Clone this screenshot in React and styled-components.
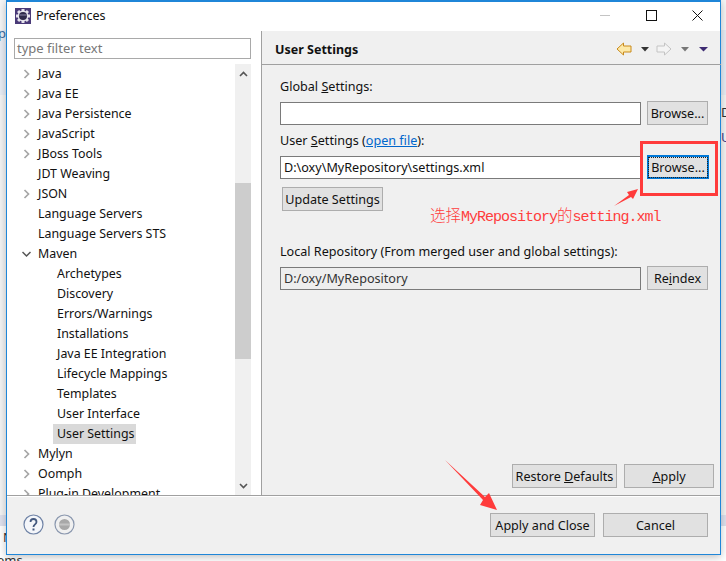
import React from 'react';
import styled, { createGlobalStyle } from 'styled-components';

const Global = createGlobalStyle`
  html, body { margin: 0; padding: 0; }
  body { background: #fff; font-family: "Noto Sans", "Noto Sans CJK SC", sans-serif; font-size: 13px; color: #111; }
`;

const Page = styled.div`
  position: relative;
  width: 726px;
  height: 561px;
  overflow: hidden;
  background: linear-gradient(
    #f6f6f6 0, #f6f6f6 30px,
    #e8edf5 30px, #e8edf5 95px,
    #f4f4f4 95px, #f4f4f4 515px,
    #dfe1ee 515px, #dfe1ee 526px,
    #fff 526px
  );
  padding-left: 6px;
  box-sizing: border-box;
`;

const Behind = styled.span`
  position: absolute;
  left: ${p => p.$x}px;
  top: ${p => p.$y}px;
  font-size: 13px;
  color: ${p => p.$color || '#333'};
`;

const Win = styled.div`
  position: relative;
  width: 715px;
  height: 555px;
  box-sizing: border-box;
  border: 1px solid #1f86d8;
  border-top-width: 2px;
  background: #f0f0f0;
  display: flex;
  flex-direction: column;
  box-shadow: 0 2px 8px rgba(0, 0, 0, 0.25);
`;

const TitleBar = styled.div`
  height: 29px;
  flex: none;
  box-sizing: border-box;
  padding: 0 0 2px 8px;
  background: #fff;
  display: flex;
  align-items: center;
  gap: 5px;
  font-size: 12.5px;
  color: #111;
`;

const TitleText = styled.span`
  flex: 1;
`;

const WinBtns = styled.div`
  display: flex;
`;

const WinBtn = styled.div`
  width: 46px;
  height: 27px;
  display: flex;
  align-items: center;
  justify-content: center;
`;

const Body = styled.div`
  flex: 1;
  display: flex;
  min-height: 0;
`;

const Sidebar = styled.div`
  width: 254px;
  flex: none;
  background: #fff;
  box-sizing: border-box;
  padding: 7px 0 0 7px;
  display: flex;
  flex-direction: column;
`;

const Filter = styled.div`
  width: 237px;
  height: 21px;
  flex: none;
  box-sizing: border-box;
  border: 1px solid #a9a9a9;
  padding-left: 2px;
  font-size: 13px;
  line-height: 18px;
  color: #777;
`;

const TreeWrap = styled.div`
  flex: 1;
  min-height: 0;
  margin-top: 5px;
  width: 237px;
  display: flex;
  overflow: hidden;
`;

const Tree = styled.div`
  flex: 1;
  overflow: hidden;
`;

const Row = styled.div`
  height: 20px;
  line-height: 19px;
  display: flex;
  align-items: flex-start;
  padding-left: ${p => p.$depth * 19 + 8}px;
  gap: 7px;
  font-size: 12.4px;
  white-space: nowrap;
  color: #111;
`;

const Twist = styled.svg`
  width: 9px;
  height: 10px;
  flex: none;
  margin-top: 5px;
`;

const Leaf = styled.span`
  padding: 0 2px 0 4px;
  height: 20px;
  line-height: 19px;
  margin-left: 12px;
  background: ${p => (p.$sel ? '#d9d9d9' : 'transparent')};
`;

const Scrollbar = styled.div`
  width: 16px;
  flex: none;
  background: #f0f0f0;
  display: flex;
  flex-direction: column;
  align-items: center;
`;

const ScrollBtn = styled.div`
  height: 19px;
  flex: none;
  display: flex;
  align-items: center;
  justify-content: center;
`;

const Track = styled.div`
  flex: 1;
  width: 100%;
  padding-top: 100px;
  box-sizing: border-box;
`;

const Thumb = styled.div`
  height: 176px;
  background: #cdcdcd;
`;

const Sash = styled.div`
  width: 1px;
  flex: none;
  background: #a0a0a0;
`;

const Panel = styled.div`
  flex: 1;
  display: flex;
  flex-direction: column;
`;

const PanelHead = styled.div`
  height: 34px;
  flex: none;
  box-sizing: border-box;
  border-bottom: 1px solid #a0a0a0;
  display: flex;
  align-items: center;
  padding: 3px 5px 0 13px;
  font-weight: 700;
  font-size: 12.5px;
  line-height: 19px;
`;

const HeadTitle = styled.span`
  flex: 1;
  padding-top: 1px;
`;

const Form = styled.div`
  flex: 1;
  display: flex;
  flex-direction: column;
  padding: 13px 12px 7px 18px;
`;

const Label = styled.div`
  height: 23px;
  font-size: 12.6px;
  line-height: 18px;
  margin-top: ${p => p.$mt || 0}px;
`;

const Line = styled.div`
  display: flex;
  gap: 6px;
  align-items: center;
  height: 24px;
`;

const Field = styled.div`
  width: 361px;
  height: 23px;
  box-sizing: border-box;
  border: 1px solid #7a7a7a;
  background: ${p => (p.$off ? '#eeeeee' : '#fff')};
  padding-left: 3px;
  font-size: 12.6px;
  line-height: 22px;
  color: ${p => (p.$off ? '#333' : '#111')};
  white-space: nowrap;
`;

const Btn = styled.div`
  width: ${p => p.$w}px;
  height: 24px;
  flex: none;
  box-sizing: border-box;
  border: ${p => (p.$focus ? '2px solid #0078d7' : '1px solid #adadad')};
  background: #e1e1e1;
  display: flex;
  align-items: center;
  justify-content: center;
  font-size: 12.6px;
  color: #111;
  white-space: pre;
`;

const FocusDots = styled.span`
  outline: 1px dotted #222;
  outline-offset: 0;
  padding: 1px 2px;
`;

const UpdateRow = styled.div`
  margin: 8px 0 0 2px;
`;

const Spacer = styled.div`
  flex: 1;
`;

const ActionRow = styled.div`
  display: flex;
  justify-content: flex-end;
  gap: 7px;
  margin-right: -5px;
`;

const Footer = styled.div`
  height: 59px;
  flex: none;
  box-sizing: border-box;
  border-top: 1px solid #a0a0a0;
  box-shadow: inset 0 1px 0 #fff;
  display: flex;
  align-items: flex-start;
  padding: 17px 12px 0 16px;
`;

const FootIcons = styled.div`
  flex: 1;
  display: flex;
  gap: 10px;
  margin-top: 1px;
`;

const FootBtns = styled.div`
  display: flex;
  gap: 8px;
`;

const Note = styled.div`
  position: absolute;
  left: 423px;
  top: 201px;
  color: #ff3c3c;
  font-family: "Liberation Mono", "Noto Sans CJK SC", monospace;
  font-size: 15px;
  letter-spacing: -1px;
  white-space: nowrap;
`;

const NoteCjk = styled.span`
  font-family: "Noto Sans CJK SC", sans-serif;
  font-size: 15.5px;
  font-weight: 300;
  letter-spacing: 0;
`;

const RedBox = styled.div`
  position: absolute;
  left: 633px;
  top: 139px;
  width: 78px;
  height: 55px;
  box-sizing: border-box;
  border: 3px solid #ff3b3b;
`;

const Overlay = styled.svg`
  position: absolute;
  left: 0;
  top: 0;
  width: 726px;
  height: 561px;
  pointer-events: none;
`;

const U = styled.span`
  text-decoration: underline;
  text-underline-offset: 1px;
`;

const LinkText = styled.span`
  color: #0066cc;
  text-decoration: underline;
  text-underline-offset: 1px;
`;

const tree = [
  ['Java', 0, 1], ['Java EE', 0, 1], ['Java Persistence', 0, 1], ['JavaScript', 0, 1],
  ['JBoss Tools', 0, 1], ['JDT Weaving', 0, 0], ['JSON', 0, 1], ['Language Servers', 0, 0],
  ['Language Servers STS', 0, 0], ['Maven', 0, 2], ['Archetypes', 1, 0], ['Discovery', 1, 0],
  ['Errors/Warnings', 1, 0], ['Installations', 1, 0], ['Java EE Integration', 1, 0],
  ['Lifecycle Mappings', 1, 0], ['Templates', 1, 0], ['User Interface', 1, 0],
  ['User Settings', 1, 0, true], ['Mylyn', 0, 1], ['Oomph', 0, 1], ['Plug-in Development', 0, 1],
];

function AppIcon() {
  const teeth = [0, 45, 90, 135];
  return (
    <svg width="16" height="16" viewBox="0 0 16 16" style={{ flex: 'none' }}>
      <rect width="16" height="16" fill="#4a3a78" />
      {teeth.map(a => (
        <rect key={a} x="6.5" y="1" width="3" height="14" fill="#e6e4ec" transform={`rotate(${a} 8 8)`} />
      ))}
      <circle cx="8" cy="8" r="5.4" fill="#e6e4ec" />
      <circle cx="8" cy="8" r="4" fill="#2f2a4a" />
      <path d="M4.3 7h7.4" stroke="#8d88a8" strokeWidth="1" />
    </svg>
  );
}

function TreeRow({ item }) {
  const [name, depth, kind, sel] = item;
  if (kind === 0) {
    return (
      <Row $depth={depth}>
        <Leaf $sel={sel}>{name}</Leaf>
      </Row>
    );
  }
  return (
    <Row $depth={depth}>
      <Twist viewBox="0 0 9 10">
        {kind === 1
          ? <path d="M2.5 1 L6.5 5 L2.5 9" fill="none" stroke="#a6a6a6" strokeWidth="1.7" />
          : <path d="M0.5 3 L4.5 7 L8.5 3" fill="none" stroke="#555" strokeWidth="1.5" />}
      </Twist>
      <span>{name}</span>
    </Row>
  );
}

export default function App() {
  return (
    <Page>
      <Global />
      <Behind $x={-2} $y={24} $color="#3a6ea5">p</Behind>
      <Behind $x={3} $y={528}>N</Behind>
      <Behind $x={-3} $y={551}>ems</Behind>
      <Behind $x={721} $y={103}>D</Behind>
      <Behind $x={721} $y={128} $color="#4a3f8a">U</Behind>
      <Win>
        <TitleBar>
          <AppIcon />
          <TitleText>Preferences</TitleText>
          <WinBtns>
            <WinBtn>
              <svg width="11" height="11" viewBox="0 0 11 11"><path d="M0 5.5h10" stroke="#c4c4c4" /></svg>
            </WinBtn>
            <WinBtn>
              <svg width="11" height="11" viewBox="0 0 11 11"><rect x="0.5" y="0.5" width="10" height="10" fill="none" stroke="#111" /></svg>
            </WinBtn>
            <WinBtn>
              <svg width="11" height="11" viewBox="0 0 11 11"><path d="M0.5 0.5l10 10M10.5 0.5l-10 10" stroke="#111" /></svg>
            </WinBtn>
          </WinBtns>
        </TitleBar>
        <Body>
          <Sidebar>
            <Filter>type filter text</Filter>
            <TreeWrap>
              <Tree>
                {tree.map(item => <TreeRow key={item[0]} item={item} />)}
              </Tree>
              <Scrollbar>
                <ScrollBtn>
                  <svg width="9" height="6" viewBox="0 0 9 6"><path d="M1 5l3.5-3.5L8 5" fill="none" stroke="#555" strokeWidth="1.6" /></svg>
                </ScrollBtn>
                <Track><Thumb /></Track>
                <ScrollBtn>
                  <svg width="9" height="6" viewBox="0 0 9 6"><path d="M1 1l3.5 3.5L8 1" fill="none" stroke="#555" strokeWidth="1.6" /></svg>
                </ScrollBtn>
              </Scrollbar>
            </TreeWrap>
          </Sidebar>
          <Sash />
          <Panel>
            <PanelHead>
              <HeadTitle>User Settings</HeadTitle>
              <svg width="100" height="14" viewBox="0 0 100 14">
                <path d="M1 7l6.500-6v3h7.500v6H7.500v3z" fill="#fde9a8" stroke="#c98a1b" />
                <path d="M25 5h8l-4 4.500z" fill="#333" />
                <path d="M55 7l-6.500-6v3H41v6h7.500v3z" fill="#f4f4f4" stroke="#c4c4c4" />
                <path d="M65 5h8l-4 4.500z" fill="#777" />
                <path d="M83 5h9l-4.500 4.500z" fill="#3d2b72" />
              </svg>
            </PanelHead>
            <Form>
              <Label>Global <U>S</U>ettings:</Label>
              <Line>
                <Field />
                <Btn $w={61}>Browse...</Btn>
              </Line>
              <Label $mt={7}>User <U>S</U>ettings (<LinkText>open file</LinkText>):</Label>
              <Line>
                <Field>D:\oxy\MyRepository\settings.xml</Field>
                <Btn $w={62} $focus><FocusDots>Browse...</FocusDots></Btn>
              </Line>
              <UpdateRow><Btn $w={101}>Update Settings</Btn></UpdateRow>
              <Label $mt={32}>Local Repository (From merged user and global settings):</Label>
              <Line>
                <Field $off>D:/oxy/MyRepository</Field>
                <Btn $w={61}>Re<U>i</U>ndex</Btn>
              </Line>
              <Spacer />
              <ActionRow>
                <Btn $w={105}>Restore <U>D</U>efaults</Btn>
                <Btn $w={90}><U>A</U>pply</Btn>
              </ActionRow>
            </Form>
          </Panel>
        </Body>
        <Footer>
          <FootIcons>
            <svg width="21" height="21" viewBox="0 0 21 21">
              <circle cx="10.5" cy="10.5" r="9.5" fill="#f4f6fa" stroke="#6f83a6" strokeWidth="1.2" />
              <path d="M7.500 8c0-4 6-4 6 0 0 2.400-3 2.400-3 5" fill="none" stroke="#44597f" strokeWidth="1.8" />
              <rect x="9.500" y="14.500" width="2" height="2" fill="#44597f" />
            </svg>
            <svg width="21" height="21" viewBox="0 0 21 21">
              <circle cx="10.5" cy="10.5" r="9.5" fill="#f0f0f0" stroke="#8a97ae" strokeWidth="1.2" />
              <circle cx="10.5" cy="10.5" r="5.500" fill="#a8a8a8" />
              <rect x="5" y="9.500" width="11" height="2" fill="#c4c4c4" />
            </svg>
          </FootIcons>
          <FootBtns>
            <Btn $w={105}>Apply and Close</Btn>
            <Btn $w={105}>Cancel</Btn>
          </FootBtns>
        </Footer>
        <RedBox />
        <Note><NoteCjk>选择</NoteCjk>MyRepository<NoteCjk>的</NoteCjk>setting.xml</Note>
      </Win>
      <Overlay viewBox="0 0 726 561">
        <path d="M614 206 L629 195 L627 192 L638 189 L633 199 L631 197 Z" fill="#ff3b3b" />
        <path d="M445 460 L485 497 L489 493 L497 510 L480 505 L483 500 Z" fill="#ff3b3b" />
      </Overlay>
    </Page>
  );
}
